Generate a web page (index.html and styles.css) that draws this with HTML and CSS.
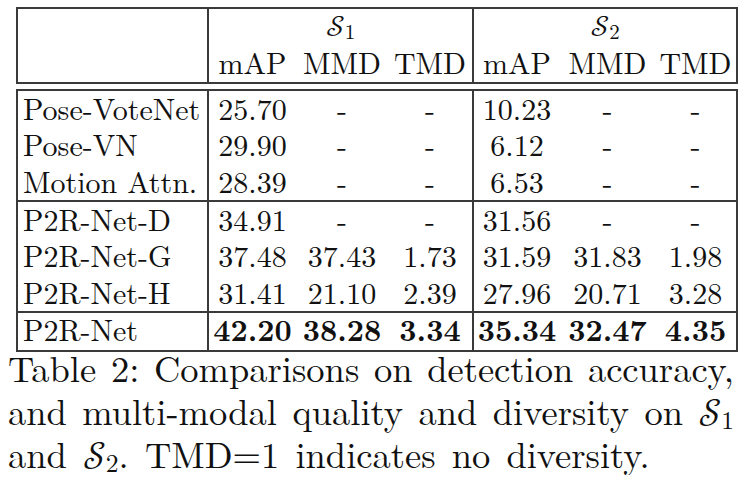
FILE: index.html
```html
<!DOCTYPE html>
<html>
<head>
<meta charset="utf-8">
<link rel="stylesheet" href="styles.css">
</head>
<body>
<div class="page">
  <div class="box grid head">
    <div class="cell corner sep"></div>
    <div class="cell grp sep"><div class="glabel"><span class="cal">𝒮</span><sub class="sub">1</sub></div></div>
    <div class="cell grp"><div class="glabel"><span class="cal">𝒮</span><sub class="sub">2</sub></div></div>
    <div class="cell hd">mAP</div>
    <div class="cell hd">MMD</div>
    <div class="cell hd sep">TMD</div>
    <div class="cell hd">mAP</div>
    <div class="cell hd">MMD</div>
    <div class="cell hd">TMD</div>
  </div>

  <div class="box body">
    <div class="grid group">
      <div class="cell name sep">Pose-VoteNet</div>
      <div class="cell num">25.70</div><div class="cell num">-</div><div class="cell num sep">-</div>
      <div class="cell num">10.23</div><div class="cell num">-</div><div class="cell num">-</div>

      <div class="cell name sep">Pose-VN</div>
      <div class="cell num">29.90</div><div class="cell num">-</div><div class="cell num sep">-</div>
      <div class="cell num">6.12</div><div class="cell num">-</div><div class="cell num">-</div>

      <div class="cell name sep">Motion Attn.</div>
      <div class="cell num">28.39</div><div class="cell num">-</div><div class="cell num sep">-</div>
      <div class="cell num">6.53</div><div class="cell num">-</div><div class="cell num">-</div>
    </div>
    <div class="grid group">
      <div class="cell name sep">P2R-Net-D</div>
      <div class="cell num">34.91</div><div class="cell num">-</div><div class="cell num sep">-</div>
      <div class="cell num">31.56</div><div class="cell num">-</div><div class="cell num">-</div>

      <div class="cell name sep">P2R-Net-G</div>
      <div class="cell num">37.48</div><div class="cell num">37.43</div><div class="cell num sep">1.73</div>
      <div class="cell num">31.59</div><div class="cell num">31.83</div><div class="cell num">1.98</div>

      <div class="cell name sep">P2R-Net-H</div>
      <div class="cell num">31.41</div><div class="cell num">21.10</div><div class="cell num sep">2.39</div>
      <div class="cell num">27.96</div><div class="cell num">20.71</div><div class="cell num">3.28</div>
    </div>
    <div class="grid group last">
      <div class="cell name sep">P2R-Net</div>
      <div class="cell num best">42.20</div><div class="cell num best">38.28</div><div class="cell num best sep">3.34</div>
      <div class="cell num best">35.34</div><div class="cell num best">32.47</div><div class="cell num best">4.35</div>
    </div>
  </div>

  <div class="caption">
    <div class="line just">Table 2: Comparisons on detection accuracy,</div>
    <div class="line just">and multi-modal quality and diversity on <span class="cal">𝒮</span><sub class="csub">1</sub></div>
    <div class="line tail">and <span class="cal">𝒮</span><sub class="csub">2</sub>. TMD=1 indicates no diversity.</div>
  </div>
</div>
</body>
</html>
```

FILE: styles.css
```css
html, body {
  margin: 0;
  padding: 0;
  background: #ffffff;
}

body {
  font-family: "Latin Modern Roman", "Liberation Serif", serif;
  color: #111111;
}

.page {
  padding-top: 7px;
}

.box {
  border: 2px solid #3a3a3a;
  margin-left: 16px;
  width: max-content;
}

.grid {
  display: grid;
  grid-template-columns: 191px 87px 92px 86px 86px 95px 81px;
  grid-auto-rows: 36.4px;
}

.body {
  margin-top: 5px;
}

.group + .group {
  border-top: 2px solid #3a3a3a;
}

.cell {
  box-sizing: border-box;
  padding-top: 1px;
  font-size: 30px;
  line-height: 32px;
  white-space: nowrap;
}

.last .cell {
  padding-top: 0;
}

.sep {
  border-right: 2px solid #3a3a3a;
}

.corner {
  grid-row: span 2;
}

.grp {
  grid-column: span 3;
  display: flex;
  justify-content: center;
  align-items: flex-end;
  padding-top: 0;
  padding-bottom: 0;
}

.glabel {
  line-height: 43px;
}

.hd {
  text-align: center;
}

.name {
  padding-left: 5px;
}

.num {
  text-align: center;
}

.best {
  font-weight: 700;
}

.cal {
  font-family: "Latin Modern Math", "DejaVu Serif", serif;
  font-weight: 400;
  line-height: 0;
}

.sub {
  font-size: 0.7em;
  line-height: 0;
  vertical-align: -0.15em;
}

.caption {
  margin-top: -6px;
  margin-left: 8px;
  width: 726px;
  font-size: 36.5px;
  line-height: 43px;
}

.line {
  white-space: nowrap;
}

.just {
  text-align: justify;
  text-align-last: justify;
}

.tail {
  word-spacing: 4px;
}

.csub {
  font-size: 0.7em;
  line-height: 0;
  vertical-align: -0.15em;
}
```
